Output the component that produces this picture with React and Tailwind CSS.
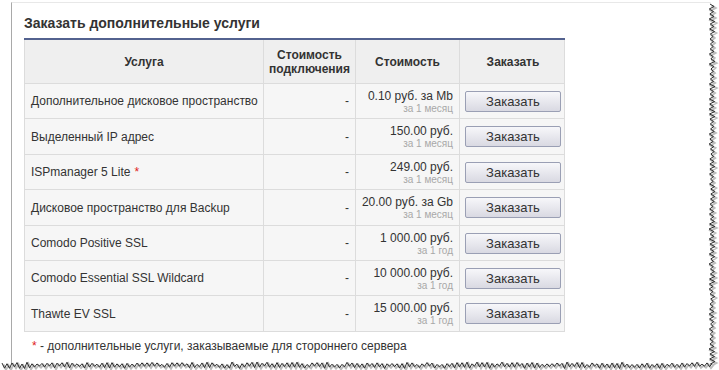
import React from 'react';

const ROWS = [
  { name: 'Дополнительное дисковое пространство', price: '0.10 руб. за Mb', period: 'за 1 месяц', h: 'h-[35px]' },
  { name: 'Выделенный IP адрес', price: '150.00 руб.', period: 'за 1 месяц', h: 'h-[36px]' },
  { name: 'ISPmanager 5 Lite', star: true, price: '249.00 руб.', period: 'за 1 месяц', h: 'h-[35px]' },
  { name: 'Дисковое пространство для Backup', price: '20.00 руб. за Gb', period: 'за 1 месяц', h: 'h-[36px]' },
  { name: 'Comodo Positive SSL', price: '1 000.00 руб.', period: 'за 1 год', h: 'h-[35px]' },
  { name: 'Comodo Essential SSL Wildcard', price: '10 000.00 руб.', period: 'за 1 год', h: 'h-[35px]' },
  { name: 'Thawte EV SSL', price: '15 000.00 руб.', period: 'за 1 год', h: 'h-[36px]' },
];

// jagged "torn paper" edge, seeded so it is the same every time
function jag(seed) {
  let s = seed;
  return () => {
    s = (s * 9301 + 49297) % 233280;
    return s / 233280;
  };
}

function TornEdge() {
  const rnd = jag(7);
  const right = [];
  let i = 0;
  for (let y = 4; y <= 364; y += 2.5, i++) right.push(`${709 + (i % 2 ? 4 : 0) + rnd() * 2},${y}`);
  const bottom = [];
  i = 0;
  for (let x = 712; x >= 0; x -= 2.5, i++) bottom.push(`${x},${362 + (i % 2 ? 4 : 0) + rnd() * 2.5}`);
  const pts = right.concat(bottom).join(' ');
  return (
    <svg className="absolute inset-0 pointer-events-none" width="719" height="370">
      <polyline points={`${pts} 0,370 719,370 719,0 712,0`} fill="#ffffff" stroke="none" />
      <polyline points={pts} fill="none" stroke="#bdbdbd" strokeWidth="2" transform="translate(1.5,1.5)" />
      <polyline points={pts} fill="none" stroke="#2e2e2e" strokeWidth="1" />
    </svg>
  );
}

function OrderButton() {
  return (
    <button className="w-[96px] h-[21px] rounded-[2px] border border-[#9a9fb4] bg-gradient-to-b from-[#f7f7fa] to-[#d9d9e2] text-[13px] text-[#333] leading-none">
      Заказать
    </button>
  );
}

export default function App() {
  return (
    <div className="relative w-[719px] h-[370px] bg-white overflow-hidden" style={{ fontFamily: '"Liberation Sans", Arial, sans-serif' }}>
      <div className="ml-[11px] mt-[2px] h-[368px] border-l border-t border-l-[#a9a9a9] border-t-[#e8e8e8] pl-[12px] pt-[11px]">
        <h2 className="text-[14px] font-bold text-[#333] leading-[18px]">Заказать дополнительные услуги</h2>

        <div className="mt-[6px] w-[541px] border-t-2 border-[#53628f]">
          <div className="grid grid-cols-[239px_92px_104px_106px] h-[44px] bg-[#efefef] border-x border-b border-[#dcdcdc] text-[12px] font-bold text-[#333] leading-[14px]">
            <div className="flex items-center justify-center border-r border-[#dcdcdc]">Услуга</div>
            <div className="flex items-center justify-center text-center border-r border-[#dcdcdc]">
              Стоимость<br />подключения
            </div>
            <div className="flex items-center justify-center border-r border-[#dcdcdc]">Стоимость</div>
            <div className="flex items-center justify-center">Заказать</div>
          </div>

          {ROWS.map((r) => (
            <div
              key={r.name}
              className={`grid grid-cols-[239px_92px_104px_106px] ${r.h} bg-[#f6f6f6] border-x border-b border-[#dcdcdc] text-[12px] text-[#333]`}
            >
              <div className="flex items-center pl-[6px] border-r border-[#dcdcdc]">
                {r.name}
                {r.star && <span className="ml-[4px] text-[#e02020]">*</span>}
              </div>
              <div className="flex items-center justify-end pr-[6px] border-r border-[#dcdcdc]">-</div>
              <div className="flex flex-col items-end justify-center pr-[6px] border-r border-[#dcdcdc]">
                <span className="leading-[14px]">{r.price}</span>
                <span className="text-[10px] leading-[11px] text-[#a8a8a8]">{r.period}</span>
              </div>
              <div className="flex items-center justify-center">
                <OrderButton />
              </div>
            </div>
          ))}
        </div>

        <p className="mt-[7px] pl-[8px] text-[12px] leading-[14px] text-[#333]">
          <span className="text-[#e02020]">*</span> - дополнительные услуги, заказываемые для стороннего сервера
        </p>
      </div>
      <TornEdge />
    </div>
  );
}
